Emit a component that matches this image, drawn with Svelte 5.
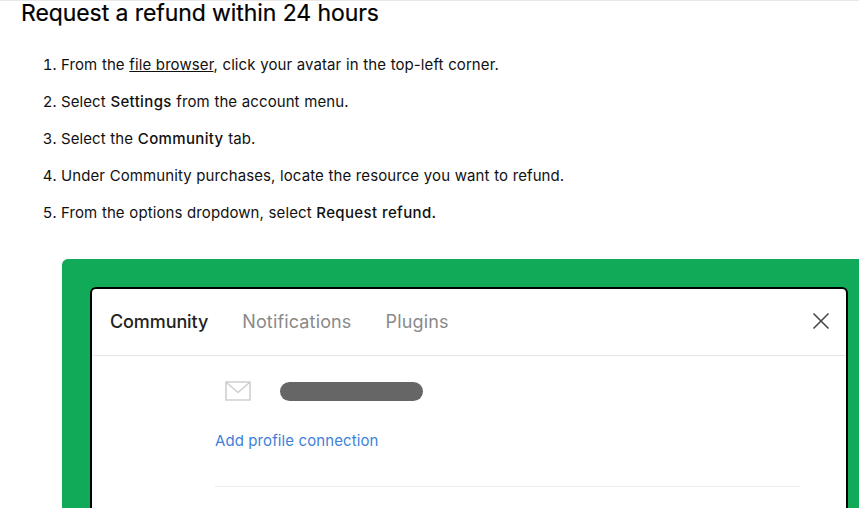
<script lang="ts">
  const tabs = ['Notifications', 'Plugins'];
</script>

<article class="article">
  <h2 class="title">Request a refund within 24 hours</h2>

  <ol class="steps">
    <li>From the <a href="#browser">file browser</a>, click your avatar in the top-left corner.</li>
    <li>Select <strong>Settings</strong> from the account menu.</li>
    <li>Select the <strong>Community</strong> tab.</li>
    <li>Under Community purchases, locate the resource you want to refund.</li>
    <li>From the options dropdown, select <strong>Request refund.</strong></li>
  </ol>

  <div class="figure">
    <div class="modal">
      <header class="tabs">
        <span class="tab active">Community</span>
        {#each tabs as tab}
          <span class="tab">{tab}</span>
        {/each}
        <svg class="close" width="18" height="18" viewBox="0 0 18 18" aria-hidden="true">
          <path d="M1.5 1.5 L16.5 16.5 M16.5 1.5 L1.5 16.5" fill="none" stroke="#444" stroke-width="1.5" />
        </svg>
      </header>

      <section class="body">
        <div class="email">
          <svg width="26" height="20" viewBox="0 0 26 20" aria-hidden="true">
            <path d="M1 1 H25 V19 H1 Z M1.5 1.5 L13 11.5 L24.5 1.5" fill="none" stroke="#cfcfcf" stroke-width="1.6" />
          </svg>
          <div class="redacted"></div>
        </div>
        <a class="connect" href="#connect">Add profile connection</a>
        <hr class="rule" />
      </section>
    </div>
  </div>
</article>

<style>
  :global(body) {
    margin: 0;
    background: #fff;
    overflow: hidden;
  }

  .article {
    height: 508px;
    overflow: hidden;
    box-sizing: border-box;
    border-top: 1px solid #e8e8e8;
    padding-left: 21px;
    font-family: Inter, "Liberation Sans", sans-serif;
    color: #111;
  }

  .title {
    margin: 0;
    font-size: 23px;
    line-height: 24px;
    font-weight: 400;
    letter-spacing: -0.08px;
    color: #000;
    -webkit-text-stroke: 0.2px #000;
  }

  .steps {
    margin: 27px 0 0;
    padding: 0 0 0 40px;
    font-size: 15px;
    line-height: 25px;
    letter-spacing: 0.09px;
    word-spacing: 0.3px;
  }

  .steps li {
    margin-bottom: 12px;
  }

  .steps a {
    color: inherit;
  }

  .steps strong {
    font-weight: 500;
    letter-spacing: 0.36px;
  }

  .figure {
    margin: 34px 0 0 41px;
    height: 260px;
    box-sizing: border-box;
    padding: 28px 11px 0 28px;
    background: #11aa58;
    border-radius: 6px 0 0 0;
  }

  .modal {
    height: 100%;
    box-sizing: border-box;
    background: #fff;
    border: 2px solid #000;
    border-bottom: 0;
    border-radius: 6px 6px 0 0;
  }

  .tabs {
    display: flex;
    align-items: center;
    gap: 34px;
    height: 67px;
    box-sizing: border-box;
    padding: 0 16px 2px 18px;
    border-bottom: 1px solid #e6e6e6;
  }

  .tab {
    font-size: 18px;
    letter-spacing: 0.15px;
    color: #8a8a8a;
  }

  .tab.active {
    color: #222;
    font-weight: 500;
    letter-spacing: -0.1px;
  }

  .close {
    margin-left: auto;
  }

  .body {
    padding: 25px 46px 0 123px;
  }

  .email {
    display: flex;
    align-items: center;
    gap: 29px;
    margin-left: 10px;
  }

  .redacted {
    width: 143px;
    height: 19px;
    border-radius: 10px;
    background: #666;
  }

  .connect {
    display: block;
    margin-top: 30px;
    font-size: 15px;
    line-height: 20px;
    letter-spacing: 0.1px;
    color: #3f7fd9;
    text-decoration: none;
  }

  .rule {
    margin: 35px 0 0;
    border: 0;
    border-top: 1px solid #ececec;
  }
</style>
